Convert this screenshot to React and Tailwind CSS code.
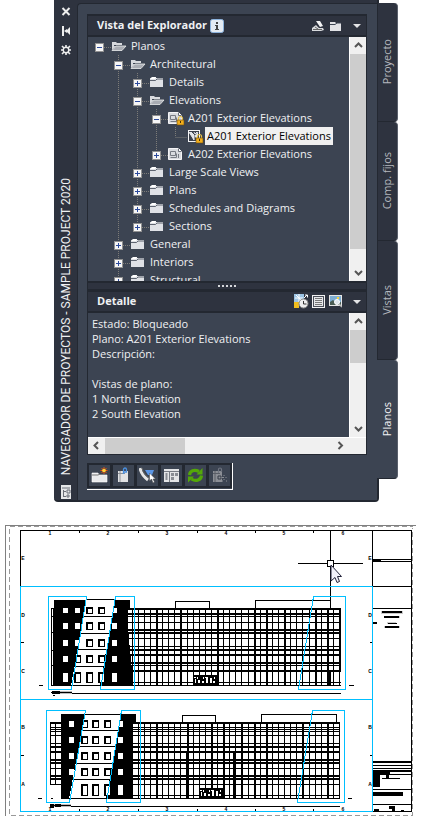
import React from 'react';
import { useState } from 'react';

const treeRows = [
  { id: 'planos', label: 'Planos', level: 0, icon: 'open', expanded: true },
  { id: 'arch', label: 'Architectural', level: 1, icon: 'open', expanded: true },
  { id: 'details', label: 'Details', level: 2, icon: 'folder', expanded: false },
  { id: 'elevations', label: 'Elevations', level: 2, icon: 'open', expanded: true },
  { id: 'a201', label: 'A201 Exterior Elevations', level: 3, icon: 'sheetLocked', expanded: true },
  { id: 'a201view', label: 'A201 Exterior Elevations', level: 4, icon: 'viewLocked', leaf: true },
  { id: 'a202', label: 'A202 Exterior Elevations', level: 3, icon: 'sheet', expanded: false, last: true },
  { id: 'large', label: 'Large Scale Views', level: 2, icon: 'folder', expanded: false },
  { id: 'plans', label: 'Plans', level: 2, icon: 'folder', expanded: false },
  { id: 'schedules', label: 'Schedules and Diagrams', level: 2, icon: 'folder', expanded: false },
  { id: 'sections', label: 'Sections', level: 2, icon: 'folder', expanded: false, last: true },
  { id: 'general', label: 'General', level: 1, icon: 'folder', expanded: false },
  { id: 'interiors', label: 'Interiors', level: 1, icon: 'folder', expanded: false },
  { id: 'structural', label: 'Structural', level: 1, icon: 'folder', expanded: false },
];

const details = [
  'Estado: Bloqueado',
  'Plano: A201 Exterior Elevations',
  'Descripción:',
  '',
  'Vistas de plano:',
  '1 North Elevation',
  '2 South Elevation',
];

const tabs = ['Proyecto', 'Comp. fijos', 'Vistas', 'Planos'];

const Lock = () => (
  <g>
    <path d="M10.500 11V9.500a2 2 0 0 1 4 0V11" fill="none" stroke="#e8c14a" strokeWidth="1.2" />
    <rect x="9" y="11" width="7" height="5" fill="#f0ad1c" stroke="#6b4b10" strokeWidth=".6" />
    <rect x="12" y="12" width="1" height="2" fill="#4a3208" />
  </g>
);

const TreeIcon = ({ type }) => (
  <svg width="18" height="18" viewBox="0 0 18 18" className="shrink-0" aria-hidden="true">
    {type === 'open' && (
      <g>
        <path d="M1 13V5h4l1 1h5v3H4.500Z" fill="#d8dade" />
        <path d="M3 8.500h8" stroke="#3c4452" />
        <path d="M1 13.500 5 9H15L11 13.500Z" fill="#a9acb3" stroke="#eceded" strokeWidth=".8" />
      </g>
    )}
    {type === 'folder' && (
      <g>
        <path d="M1 14V6h2V4h4v1h7v9Z" fill="#dfe1e6" />
        <path d="M1 7.500h5.500L8 6h6" fill="none" stroke="#3c4452" strokeWidth=".8" />
        <path d="M1 5.500 3 4h4L6 6H1Z" fill="#fff" />
      </g>
    )}
    {(type === 'sheet' || type === 'sheetLocked') && (
      <g>
        <path d="M.5 3.500h10l3 3v8H.5Z" fill="#d9dbdf" stroke="#f4f4f6" />
        <path d="M10.500 3.500v3h3" fill="#fff" stroke="#6b6f78" />
        <path d="M2.500 6.500h5v4h-5zM2.500 12.500h6v-4M10.500 9v4" fill="none" stroke="#777b83" />
        {type === 'sheetLocked' && <Lock />}
      </g>
    )}
    {type === 'viewLocked' && (
      <g>
        <rect x="1.500" y="3.500" width="11" height="11" fill="#3a3f4a" stroke="#f4f4f6" />
        <path d="M2 5l5 8V8L4 5M11 5 8 9l3 4" fill="#e4e6ea" stroke="#e4e6ea" />
        <path d="M7 5l1 2 2-2" fill="none" stroke="#e4e6ea" />
        <Lock />
      </g>
    )}
  </svg>
);

const Toggle = ({ row }) => {
  const x = 4.5;
  const lines = (
    <g stroke="#7d7c78" strokeDasharray="1 1">
      {row.level > 0 && <path d={row.last || row.leaf ? `M${x} 0V9` : `M${x} 0V18`} />}
      <path d={`M${x} 10.5H16`} />
    </g>
  );
  if (row.leaf) {
    return <svg width="16" height="18" viewBox="0 0 16 18" className="shrink-0" aria-hidden="true">{lines}</svg>;
  }
  return (
    <button type="button" aria-label={`${row.expanded ? 'Contraer' : 'Expandir'} ${row.label}`} className="shrink-0">
      <svg width="16" height="18" viewBox="0 0 16 18" className="block" shapeRendering="crispEdges">
        {lines}
        <rect x=".5" y="6.5" width="8" height="8" fill="#f6f6f6" stroke="#919191" />
        <path d={row.expanded ? 'M2 10.5h5' : 'M2 10.5h5M4.5 8v5'} stroke="#2c4a9c" />
      </svg>
    </button>
  );
};

const TreeRow = ({ row, selected, onSelect }) => (
  <li role="treeitem" aria-selected={selected} className="flex h-[18px] items-center pl-[7px]">
    {Array.from({ length: row.level }, (_, k) => (
      <svg key={k} width="19" height="18" viewBox="0 0 19 18" className="shrink-0" aria-hidden="true">
        {k > 0 && <path d="M4.5 0V18" stroke="#7d7c78" strokeDasharray="1 1" />}
      </svg>
    ))}
    <Toggle row={row} />
    <TreeIcon type={row.icon} />
    <button
      type="button"
      onClick={onSelect}
      className={`h-[18px] px-[2px] leading-[18px] whitespace-nowrap ${selected ? 'bg-[#f0f0f0] text-black' : ''}`}
    >
      {row.label}
    </button>
  </li>
);

const Chevron = ({ d }) => (
  <svg width="17" height="17" viewBox="0 0 17 17" aria-hidden="true">
    <path d={d} fill="none" stroke="#555" strokeWidth="2" />
  </svg>
);

const VScroll = ({ thumb }) => (
  <div className="flex w-[17px] shrink-0 flex-col border-l border-white bg-[#f0f0f0]">
    <button type="button" aria-label="Subir" className="h-[17px]"><Chevron d="M5 10l3.500-3.500L12 10" /></button>
    <div className={`bg-[#cdcdcd] ${thumb}`}></div>
    <button type="button" aria-label="Bajar" className="mt-auto h-[17px]"><Chevron d="M5 7l3.500 3.500L12 7" /></button>
  </div>
);

const MenuArrow = () => (
  <button type="button" aria-label="Menú" className="ml-[10px]">
    <svg width="10" height="16" viewBox="0 0 10 16" className="block"><path d="M1 6h8L5 10Z" fill="#e3e4e6" /></svg>
  </button>
);

const PanelHeader = ({ children }) => (
  <div className="flex h-[23px] items-center border-y-2 border-[#232831] bg-[#2e333f] pr-1 pl-[9px]">{children}</div>
);

const toolIcons = [
  {
    name: 'Nuevo conjunto',
    art: (
      <g>
        <path d="M1 15V6h6l1 2h8v7Z" fill="#e9eaec" stroke="#fff" strokeWidth=".6" />
        <path d="M1 8h6l2-1" stroke="#777" fill="none" />
        <path d="M13 0v7M9.500 3.500h7M10.500 1l5 5M15.500 1l-5 5" stroke="#e8540c" />
        <circle cx="13" cy="3.500" r="1.800" fill="#ffd23a" />
      </g>
    ),
  },
  {
    name: 'Añadir plano',
    art: (
      <g>
        <path d="M3 4h10v11H3Z" fill="#e2e3e5" />
        <path d="M5 4v11M3 6.500h7" stroke="#8d9096" />
        <path d="M8.500 7V2.500a1.500 1.500 0 0 1 3 0V5h-3" fill="none" stroke="#4b90e0" strokeWidth="1.300" />
      </g>
    ),
  },
  {
    name: 'Editar',
    art: (
      <g>
        <path d="M1 1c1 6 4 9 8 12" stroke="#e5e5e5" strokeWidth="3" fill="none" />
        <path d="M3 1c1 5 4 8 7 10" stroke="#666" fill="none" />
        <path d="M6 3h9l-2 5H9Z" fill="#5b96e6" />
        <path d="M10.500 6v8l2-2 1.500 4 1.500-1-1.500-3h2.500Z" fill="#fff" stroke="#444" strokeWidth=".5" />
      </g>
    ),
  },
  {
    name: 'Propiedades',
    art: (
      <g>
        <rect x="1" y="2" width="15" height="13" fill="#e4e5e7" />
        <path d="M1 4.500h15M6.500 5v10" stroke="#777b83" />
        <path d="M8 6h3v3H8zM12 6h3v3h-3zM8 10h3v3H8zM2.500 6h2v7h-2z" fill="#8a8d94" />
      </g>
    ),
  },
  {
    name: 'Actualizar',
    art: (
      <g fill="none" stroke="#54a808" strokeWidth="3.200">
        <path d="M2.500 8C3 4 7 2 12 4.500" />
        <path d="M14.500 8.500C14 13 9 15 4.500 12" />
        <path d="M15.500 1v6.500H9.500ZM1 15.500V9.500h6Z" fill="#54a808" stroke="none" />
      </g>
    ),
  },
  {
    name: 'Quitar plano',
    art: (
      <g>
        <path d="M2 4h9v11H2Z" fill="#8b8e95" />
        <path d="M4 4v11M2 6.500h7" stroke="#5a5e67" />
        <path d="M7.500 6V2.500a1.500 1.500 0 0 1 3 0V5" fill="none" stroke="#6f7480" strokeWidth="1.200" />
        <path d="M7 9h3v3H7z" stroke="#343a46" fill="none" />
        <path d="M10.500 10.500H13M13 8v1M13 12v1M15 10v1M15 14h1M11 14h1" stroke="#8b8e95" fill="none" />
      </g>
    ),
  },
];

/* Sheet drawing */

const upperH = [[608, 2], [613, 2], [616, 1], [622, 1], [629, 2], [632, 2], [638, 1], [646, 1], [649, 2], [654, 2], [662, 2], [665, 1], [670, 2], [682, 1], [685, 1]];
const lowerH = [[722, 2], [727, 1], [729, 1], [731, 1], [735, 1], [743, 1], [746, 2], [751, 2], [759, 2], [762, 2], [768, 1], [775, 2], [778, 2], [784, 1], [795, 1], [798, 1]];
const thickUpper = [5, 9, 15, 21, 23, 26, 31, 33];
const thickLower = [4, 9, 13, 15, 18, 20, 22, 28, 32];
const bays = Array.from({ length: 36 }, (_, i) => 126 + i * 6 + Math.floor(i / 10));

const rects = (list) => list.map(([x, y, w, h]) => `M${x} ${y}h${w}v${h}h${-w}z`).join('');

const upperPath = rects([
  ...upperH.map(([y, h]) => [126, y, 215, h]),
  ...bays.map((x, i) => [x, 608, thickUpper.includes(i) ? 2 : 1, 78]),
  [340, 608, 1, 64],
  [328, 671, 3, 15],
]);

const lowerPath = rects([
  ...lowerH.map(([y, h]) => [132, y, 208, h]),
  ...bays.slice(1).map((x, i) => [x, 722, thickLower.includes(i) ? 2 : 1, 77]),
  ...lowerH.filter(([y]) => y < 790).map(([y, h]) => [50, y, 12, h]),
  [50, 722, 1, 63],
  [55, 722, 1, 63],
  [186, 753, 3, 46],
  [233, 753, 2, 46],
]);

const upperWindows = [[608, 5], [623, 6], [640, 6], [656, 6], [673, 9]];
const lowerWindows = [[721, 6], [737, 6], [753, 6], [769, 6], [785, 10]];

// Windows on the dark towers are plain, the ones on the light bay have a heavy frame
const Windows = ({ rows, dark = [], light = [] }) => (
  <g>
    {rows.map(([y, h]) => (
      <g key={y}>
        {light.map((x) => (
          <g key={x}>
            <path d={rects([[x, y - 1, 7, h + 2]])} />
            <path d={rects([[x + 2, y + 1, 4, h - 1]])} fill="#fff" />
          </g>
        ))}
        {dark.map((x) => <path key={x} d={rects([[x, y, 5, h]])} fill="#fff" />)}
      </g>
    ))}
  </g>
);

const Door = ({ x, y }) => (
  <g>
    <path d={rects([[x, y, 24, 10]])} />
    <path
      d={rects([
        [x + 1, y + 2, 2, 1], [x + 2, y + 4, 1, 4], [x + 4, y + 2, 1, 2], [x + 5, y + 5, 2, 3], [x + 10, y + 2, 1, 2], [x + 9, y + 6, 2, 2],
        [x + 12, y + 2, 3, 1], [x + 13, y + 3, 2, 5], [x + 17, y + 3, 2, 5], [x + 21, y + 2, 1, 2], [x + 20, y + 6, 2, 2],
      ])}
      fill="#fff"
    />
  </g>
);

const ticks = [79, 138, 197, 255, 313];
const columnMarks = [[50, '1'], [108, '2'], [167, '3'], [226, '4'], [284, '5'], [343, '6']];
const rowMarks = [[558, 'E'], [615, 'D'], [671, 'C'], [727, 'B'], [784, 'A']];

const Sheet = () => (
  <svg viewBox="0 502 426 325" className="block w-full font-['Liberation_Sans']" role="img" aria-label="Alzados exteriores" shapeRendering="crispEdges">
    <g fill="none" stroke="#808080">
      <path d="M416 525.500H5.500V815.500" />
      <path d="M10 526.500H412.500M9.500 529V815.500H412.500V528" strokeDasharray="5 3" stroke="#999" />
    </g>
    <g fill="none" stroke="#000">
      <path d="M20.500 586V530.500H411.500V811.500H372M372.500 530V586" />
      <path d="M372 559.500h39M372 561.500h39M372 586.500h39M372 608.500h39" />
      {ticks.map((x) => <path key={x} d={`M${x + 0.5} 531v2M${x + 0.5} 809v2`} />)}
      <path d="M21 642.500h3M21 755.500h3M370 642.500h2M370 755.500h2" />
      <path d="M175.500 608V601.500H209.500V608M255.500 608V600.500H330.500V608" />
      <path d="M182.500 722V715.500H215.500V722M261.500 722V714.500H336.500V722" />
      <path d="M72 693.500h269M71 806.500h269" />
      <path d="M39 685.500h4M338 685.500h3M349 685.500h5M38 798.500h4M51 798.500h2M348 798.500h4" />
    </g>
    <g fontSize="5" fontWeight="bold" textAnchor="middle">
      {columnMarks.map(([x, t]) => (
        <g key={t}>
          <text x={x} y="535">{t}</text>
          <text x={x} y="811">{t}</text>
        </g>
      ))}
      {rowMarks.map(([y, t]) => (
        <g key={t}>
          <text x="23" y={y + 2}>{t}</text>
          <text x="370" y={y + 2}>{t}</text>
        </g>
      ))}
    </g>

    {/* upper elevation */}
    <path d={upperPath} />
    <path d="M54 600H86L71 686H53V608H54ZM115 600H130V608H126L132 671V686H100Z" />
    <path d="M126 608h2v78h-2zM126 671h6v15h-6z" />
    <path d="M51.500 608V686M51 608.500h3M51 616.500h3M51 632.500h3M51 650.500h3M51 665.500h3M51 685.500h3" stroke="#000" />
    <path d="M86 599.500H115M83 616.500h31M80 633.500h31M77 649.500h31M74 666.500h31M71 685.500h31" stroke="#000" />
    <Windows rows={upperWindows} light={[86, 98]} dark={[63, 112]} />
    <Windows rows={upperWindows.slice(0, 3)} dark={[75]} />
    <Windows rows={upperWindows.slice(3)} light={[74]} />
    <Door x={193} y={675} />
    <path d="M54 691h18v3H54z" fill="#bbb" />
    <path d="M51 692h21v1H51zM52 691h8v3h-8zM53 695h2v1h-2z" />

    {/* lower elevation */}
    <path d={lowerPath} />
    <path d="M61 714H85L69 799H61ZM121 714H136V722H132V799H106Z" />
    <path d="M85 714.500H121M82 730.500h37M79 746.500h36M76 763.500h36M73 779.500h36M69 798.500h38" stroke="#000" />
    <Windows rows={lowerWindows} light={[81, 92, 104]} dark={[118]} />
    <Windows rows={lowerWindows.slice(0, 4)} dark={[69]} />
    <Door x={199} y={788} />
    <path d="M54 804h17v3H54z" fill="#bbb" />
    <path d="M50 804h4v4h-4zM53 805h18v1H53zM55 804h6v3h-6z" />

    {/* title block */}
    <path d="M381 611h22v3h-22zM384 616h16v2h-16zM387 622h9v2h-9zM384 626h16v2h-16z" fill="#ccc" />
    <path d="M382 611h20v2h-20zM384 616h15v2h-15zM388 623h9v1h-9zM385 626h14v2h-14zM373 622h4v2h-4zM373 560h8v2h-8z" />
    <path d="M373 761h38v2h-38zM373 765h38v1h-38zM373 768h38v1h-38zM373 770h38v2h-38zM373 772h17v3h-17zM373 775h7v12h-7zM382 774h29v1h-29zM382 778h18v1h-18zM386 775h3v3h-3zM373 789h38v1h-38zM373 792h30v4h-30zM373 804h38v1h-38zM389 806h6v3h-6zM374 809h5v2h-5zM392 809h3v2h-3zM401 810h3v1h-3z" />

    {/* crosshair */}
    <path d="M298 563.500H363M330.500 531V600" stroke="#000" />
    <rect x="327.500" y="560.500" width="6" height="6" fill="#fff" stroke="#000" />

    {/* viewports and section cuts */}
    <g fill="none" stroke="#00bfff">
      <path d="M20.500 586.500H372.500V811.500H20.500ZM20.500 699.500H372.500" />
      <path d="M86.500 596.500H48.500V689.500H71.500ZM115.500 596.500H134.500V689.500H100.500ZM313.500 596.500H345.500V689.500H298.500Z" />
      <path d="M85.500 710.500H46.500V802.500H69.500ZM121.500 710.500H140.500V802.500H106.500ZM312.500 710.500H344.500V802.500H297.500Z" />
    </g>
    <path d="M331 565V581L335 577.500L337 582.500L339.500 581.500L337.500 576.500H341.500Z" fill="#f2f2fa" stroke="#22223a" shapeRendering="auto" />
  </svg>
);

const App = () => {
  const [selected, setSelected] = useState('a201view');
  const [tab, setTab] = useState('Planos');

  return (
    <div className="min-h-screen bg-white">
      <main className="mr-[28px] ml-[54px] flex items-start font-['Open_Sans',sans-serif] text-[11px] text-[#f0f1f3]">
        <div className="flex min-w-0 flex-1 self-stretch rounded-b-sm border-r-2 border-b-2 border-[#232831] bg-[#2e333f]">
          {/* title strip */}
          <div className="flex w-[23px] shrink-0 flex-col items-center gap-[3px] pt-1">
            <button type="button" aria-label="Cerrar">
              <svg width="16" height="16" viewBox="0 0 16 16" className="block"><path d="M4.500 4l7 7M11.500 4l-7 7" stroke="#eee" strokeWidth="2" /></svg>
            </button>
            <button type="button" aria-label="Ocultar">
              <svg width="16" height="16" viewBox="0 0 16 16" className="block"><path d="M4 3h2v10H4zM6 8l3-2v4ZM8 8l4-4v8Z" fill="#eee" /></svg>
            </button>
            <button type="button" aria-label="Opciones">
              <svg width="16" height="16" viewBox="0 0 16 16" className="block">
                <circle cx="8" cy="8" r="2.800" fill="none" stroke="#eee" strokeWidth="1.400" />
                <path d="M8 3v2M8 11v2M3 8h2M11 8h2M4 4l2 2M12 4l-2 2M4 12l2-2M12 12l-2-2" stroke="#eee" strokeWidth="1.600" />
              </svg>
            </button>
            <h1 className="mt-auto mb-[7px] rotate-180 font-['Roboto',sans-serif] text-xs whitespace-nowrap [writing-mode:vertical-rl]">
              NAVEGADOR DE PROYECTOS - SAMPLE PROJECT 2020
            </h1>
            <svg width="12" height="15" viewBox="0 0 12 15" aria-hidden="true">
              <path d="M1 0h10v14H1Z" fill="#e6e7e9" />
              <path d="M2 3h8M3.500 5v7M4 6.500h2M4 11.500h2M7 5h3v3H7zM7 10h2v2H7z" stroke="#6b6f78" fill="none" />
            </svg>
          </div>

          <div className="mt-[3px] min-w-0 flex-1 rounded-tl border-t border-l border-[#232831] bg-[#3c4452] pt-[10px] pr-[10px] pb-[10px] pl-[9px]">
            <section className="border-x border-[#232831]">
              <PanelHeader>
                <h2 className="font-bold">Vista del Explorador</h2>
                <button type="button" aria-label="Información" className="ml-[3px]">
                  <svg width="14" height="14" viewBox="0 0 14 14" className="block">
                    <rect x=".5" y=".5" width="13" height="13" rx="2" fill="#e4ebf3" stroke="#8db4de" />
                    <path d="M6 3h2v2H6zM5 6h3v4h1v1H5v-1h1V7H5z" fill="#444" />
                  </svg>
                </button>
                <button type="button" aria-label="Exportar" className="ml-auto">
                  <svg width="14" height="12" viewBox="0 0 14 12" className="block">
                    <path d="M1 8 5 5l3 3h4l1 2-3 1H1Z" fill="#d9dbde" />
                    <path d="M5 1h4l3 5-3 1Z" fill="#f4f4f4" />
                    <path d="M2 9.500h9M4 7l3 2" stroke="#666" />
                  </svg>
                </button>
                <button type="button" aria-label="Nueva carpeta" className="ml-1">
                  <svg width="13" height="12" viewBox="0 0 13 12" className="block">
                    <path d="M1 11V2h5l1 1h5v8Z" fill="#e2e3e6" />
                    <path d="M1 4.500h5L8 3h4" stroke="#3c4452" fill="none" />
                  </svg>
                </button>
                <MenuArrow />
              </PanelHeader>
              <div className="flex h-[244px] overflow-hidden">
                <ul role="tree" aria-label="Planos" className="min-w-0 flex-1 overflow-hidden">
                  {treeRows.map((row) => (
                    <TreeRow key={row.id} row={row} selected={selected === row.id} onSelect={() => setSelected(row.id)} />
                  ))}
                </ul>
                <VScroll thumb="h-[195px]" />
              </div>
            </section>

            <div className="flex h-[9px] items-center justify-center gap-[2px] border border-t-2 border-[#232831] bg-[#2e333f]">
              {[0, 1, 2, 3, 4].map((n) => <span key={n} className="size-[2px] bg-[#d5d7da]"></span>)}
            </div>

            <section className="border border-t-0 border-[#232831]">
              <PanelHeader>
                <h2 className="font-bold">Detalle</h2>
                <button type="button" aria-label="Estado de archivo" className="ml-auto">
                  <svg width="15" height="15" viewBox="0 0 15 15" className="block">
                    <rect width="10" height="8" fill="#9cc4e4" />
                    <path d="M5 0v8M1 4h8M2 1l6 6" stroke="#fff" />
                    <path d="M0 8h5v6H0Z" fill="#f2bd1d" />
                    <circle cx="9.500" cy="9.500" r="4.500" fill="#eee" stroke="#888" />
                    <path d="M9.500 7v3h3" stroke="#333" fill="none" />
                    <path d="M10 4l3-3M11 1h2.500v2.500" stroke="#fff" fill="none" />
                  </svg>
                </button>
                <button type="button" aria-label="Detalles" className="ml-[3px]">
                  <svg width="13" height="13" viewBox="0 0 13 13" className="block" shapeRendering="crispEdges">
                    <rect x=".5" y=".5" width="12" height="12" fill="#4a4e58" stroke="#f2f2f2" />
                    <rect x="2" y="2" width="9" height="9" fill="#e8e9eb" />
                    <path d="M3 3.500h7M3 5.500h7M3 7.500h7M3 9.500h7" stroke="#777" />
                  </svg>
                </button>
                <button type="button" aria-label="Vista preliminar" className="ml-1">
                  <svg width="13" height="13" viewBox="0 0 13 13" className="block">
                    <rect x=".5" y=".5" width="12" height="10" fill="#7faed2" stroke="#e6e6e6" />
                    <path d="M1 10V7l3-2 4 3 4-1v3Z" fill="#4b5d54" />
                    <rect x="8" y="2" width="2" height="2" fill="#f5d442" />
                    <circle cx="8" cy="7" r="2.500" fill="#dfe6ec" stroke="#fff" />
                    <path d="M10 9l3 3" stroke="#bbb" strokeWidth="1.500" />
                  </svg>
                </button>
                <MenuArrow />
              </PanelHeader>
              <div className="flex h-[124px]">
                <div className="min-w-0 flex-1 overflow-hidden pt-[3px] pl-1 leading-[15px] whitespace-nowrap">
                  {details.map((line, i) => <p key={i} className="h-[15px]">{line}</p>)}
                </div>
                <VScroll thumb="h-[33px]" />
              </div>
              <div className="flex h-[17px] border-t border-white bg-[#f0f0f0] pr-[17px]">
                <button type="button" aria-label="Izquierda" className="w-[17px]"><Chevron d="M10 4L6.500 7.500L10 11" /></button>
                <div className="w-[80px] bg-[#cdcdcd]"></div>
                <button type="button" aria-label="Derecha" className="ml-auto w-[17px]"><Chevron d="M6.500 4L10 7.500L6.500 11" /></button>
              </div>
            </section>

            <div className="mt-[8px] flex w-fit border-r border-b border-white pb-px">
              {toolIcons.map((tool) => (
                <button key={tool.name} type="button" aria-label={tool.name} className="-mr-px flex h-[25px] w-[25px] items-center justify-center border-2 border-[#232831] last:mr-0">
                  <svg width="17" height="17" viewBox="0 0 17 17">{tool.art}</svg>
                </button>
              ))}
            </div>
          </div>
        </div>

        <div role="tablist" aria-orientation="vertical" className="-ml-[2px] flex w-[21px] shrink-0 flex-col pt-[3px] pb-[22px]">
          {tabs.map((name) => (
            <button
              key={name}
              type="button"
              role="tab"
              aria-selected={tab === name}
              onClick={() => setTab(name)}
              className={`flex h-[119px] items-center justify-center rounded-r-sm border-r border-b border-b-[#232831] border-r-[#5a606c] ${tab === name ? 'bg-[#3c4452] text-[#f0f1f3]' : 'border-l border-l-[#232831] bg-[#2e333f] text-[#b5b8be]'}`}
            >
              <span className="rotate-180 [writing-mode:vertical-rl]">{name}</span>
            </button>
          ))}
        </div>
      </main>
      <Sheet />
    </div>
  );
};

export default App;
